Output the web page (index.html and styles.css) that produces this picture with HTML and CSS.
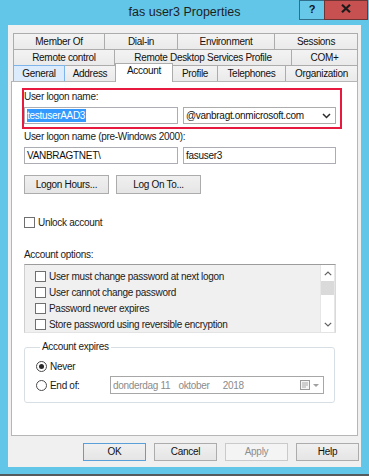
FILE: index.html
```html
<!DOCTYPE html>
<html lang="en">
<head>
<meta charset="utf-8">
<title>fas user3 Properties</title>
<link rel="stylesheet" href="styles.css">
</head>
<body>
<div class="window">
  <div class="titlebar">
    <div class="title">fas user3 Properties</div>
    <div class="caption-btns">
      <div class="cap-btn help">?</div>
      <div class="cap-btn close">
        <svg width="10" height="9" viewBox="0 0 10 9"><path d="M1 0.8 L9 8.2 M9 0.8 L1 8.2" stroke="#1b1b1b" stroke-width="2.2" fill="none"/></svg>
      </div>
    </div>
  </div>

  <div class="client">
    <div class="tabs">
      <div class="tab-row">
        <div class="tab t-member">Member Of</div>
        <div class="tab t-dialin">Dial-in</div>
        <div class="tab t-env">Environment</div>
        <div class="tab t-sessions">Sessions</div>
      </div>
      <div class="tab-row">
        <div class="tab t-remote">Remote control</div>
        <div class="tab t-rds">Remote Desktop Services Profile</div>
        <div class="tab t-com">COM+</div>
      </div>
      <div class="tab-row front-row">
        <div class="tab t-general hot">General</div>
        <div class="tab t-address">Address</div>
        <div class="tab t-account selected">Account</div>
        <div class="tab t-profile">Profile</div>
        <div class="tab t-phones">Telephones</div>
        <div class="tab t-org">Organization</div>
      </div>
    </div>

    <div class="panel">
      <div class="highlight-box">
        <div class="field-label">User logon name:</div>
        <div class="field-row">
          <div class="textbox"><span class="selection">testuserAAD3</span></div>
          <div class="textbox combo">
            <span>@vanbragt.onmicrosoft.com</span>
            <svg class="chev" width="9" height="6" viewBox="0 0 9 6"><path d="M1 1 L4.5 4.5 L8 1" stroke="#2b2b2b" stroke-width="1.5" fill="none"/></svg>
          </div>
        </div>
      </div>

      <div class="field-label second">User logon name (pre-Windows 2000):</div>
      <div class="field-row">
        <div class="textbox">VANBRAGTNET\</div>
        <div class="textbox">fasuser3</div>
      </div>

      <div class="button-row">
        <div class="btn wide">Logon Hours...</div>
        <div class="btn wide">Log On To...</div>
      </div>

      <div class="check-row unlock">
        <span class="check"></span>
        <span>Unlock account</span>
      </div>

      <div class="field-label options-label">Account options:</div>
      <div class="listbox">
        <div class="list-items">
          <div class="check-row item"><span class="check"></span><span>User must change password at next logon</span></div>
          <div class="check-row item"><span class="check"></span><span>User cannot change password</span></div>
          <div class="check-row item"><span class="check"></span><span>Password never expires</span></div>
          <div class="check-row item"><span class="check"></span><span>Store password using reversible encryption</span></div>
        </div>
        <div class="scrollbar">
          <div class="sb-arrow">
            <svg width="8" height="5" viewBox="0 0 8 5"><path d="M0.8 4.2 L4 1 L7.2 4.2" stroke="#606060" stroke-width="1.2" fill="none"/></svg>
          </div>
          <div class="sb-thumb"></div>
          <div class="sb-track"></div>
          <div class="sb-arrow">
            <svg width="8" height="5" viewBox="0 0 8 5"><path d="M0.8 0.8 L4 4 L7.2 0.8" stroke="#606060" stroke-width="1.2" fill="none"/></svg>
          </div>
        </div>
      </div>

      <fieldset class="group">
        <legend>Account expires</legend>
        <div class="radio-row never">
          <span class="radio checked"></span>
          <span>Never</span>
        </div>
        <div class="radio-row endof">
          <div class="radio-label">
            <span class="radio"></span>
            <span>End of:</span>
          </div>
          <div class="datepicker">
            <span class="date-text"><span class="d-day">donderdag 11</span><span class="d-month">oktober</span><span>2018</span></span>
            <svg class="cal" width="20" height="11" viewBox="0 0 20 11">
              <rect x="0.5" y="0.5" width="9" height="9" fill="#f4f4f4" stroke="#9a9a9a"/>
              <path d="M2 3 H8 M2 5 H8 M2 7 H6" stroke="#a8a8a8" stroke-width="1"/>
              <path d="M13 4 H19 L16 7 Z" fill="#a0a0a0"/>
            </svg>
          </div>
        </div>
      </fieldset>
    </div>

    <div class="dialog-buttons">
      <div class="btn default">OK</div>
      <div class="btn">Cancel</div>
      <div class="btn disabled">Apply</div>
      <div class="btn">Help</div>
    </div>
  </div>
</div>
<div class="bottom-edge"></div>
</body>
</html>
```

FILE: styles.css
```css
* {
  box-sizing: border-box;
}

html,
body {
  margin: 0;
  padding: 0;
}

body {
  width: 369px;
  height: 476px;
  overflow: hidden;
  background: #62c6e9;
  font-family: "Liberation Sans", Arial, sans-serif;
  font-size: 10px;
  letter-spacing: -0.3px;
  color: #000;
  display: flex;
  flex-direction: column;
}

.window {
  height: 474px;
  display: flex;
  flex-direction: column;
}

.bottom-edge {
  height: 2px;
  background: #555a5c;
}

/* title bar */
.titlebar {
  height: 25px;
  display: grid;
  grid-template-columns: 1fr auto 1fr;
  align-items: start;
}

.title {
  grid-column: 2;
  font-size: 12.5px;
  letter-spacing: 0;
  line-height: 24px;
  color: #1e1e1e;
}

.caption-btns {
  grid-column: 3;
  justify-self: end;
  display: flex;
  margin-right: 1px;
}

.cap-btn {
  height: 20px;
  display: flex;
  align-items: center;
  justify-content: center;
  padding-bottom: 3px;
}

.help {
  width: 25px;
  background: #67c8ea;
  border: 1px solid #2f6f8c;
  border-right: none;
  font-weight: bold;
  font-size: 11px;
  letter-spacing: 0;
  color: #111;
}

.close {
  width: 44px;
  background: #c75050;
  border: 1px solid #6e3434;
}

/* client area */
.client {
  margin: 0 8px;
  height: 442px;
  background: #f0f0f0;
  padding: 8px 3px 6px 3px;
  display: flex;
  flex-direction: column;
}

/* tabs */
.tabs {
  margin-left: 2px;
  width: 345px;
}

.tab-row {
  display: flex;
  height: 16px;
}

.tab {
  height: 16px;
  border: 1px solid #acacac;
  border-bottom: none;
  margin-right: -1px;
  background: linear-gradient(#f3f3f3, #eaeaea);
  text-align: center;
  line-height: 15px;
  white-space: nowrap;
  color: #111;
}

.t-member { width: 92px; }
.t-dialin { width: 74px; }
.t-env { width: 98px; }
.t-sessions { width: 84px; }
.t-remote { width: 102px; }
.t-rds { width: 178px; }
.t-com { width: 67px; }
.t-general { width: 52px; }
.t-address { width: 52px; }
.t-account { width: 58px; }
.t-profile { width: 46px; }
.t-phones { width: 69px; }
.t-org { width: 73px; }

.front-row {
  align-items: flex-end;
}

.tab.hot {
  background: #dcecfc;
  border-color: #7eb4ea;
  position: relative;
  z-index: 1;
}

.tab.selected {
  height: 19px;
  margin-top: -2px;
  margin-bottom: -1px;
  align-self: flex-start;
  background: #fff;
  position: relative;
  z-index: 2;
  line-height: 14px;
}

/* panel */
.panel {
  flex: 1;
  background: #fff;
  border: 1px solid #b6b6b6;
  padding: 6px 0 0 12px;
}

.highlight-box {
  margin-left: -2px;
  width: 320px;
  border: 2px solid #e8193f;
  padding: 0 4px 3px 0;
}

.field-label {
  line-height: 14px;
  height: 14px;
  color: #1a1a1a;
  white-space: nowrap;
}

.field-label.second {
  margin-top: 1px;
}

.field-row {
  display: grid;
  grid-template-columns: 154px 153px;
  column-gap: 5px;
  margin-top: 3px;
}

.textbox {
  height: 17px;
  border: 1px solid #abadb3;
  background: #fff;
  padding: 0 2px;
  line-height: 15px;
  white-space: nowrap;
  overflow: hidden;
  color: #111;
}

.selection {
  background: #3399ff;
  color: #fff;
  display: inline-block;
  line-height: 13px;
  padding-right: 1px;
}

.combo {
  display: flex;
  align-items: center;
  justify-content: space-between;
  border-color: #acacac;
  padding-right: 4px;
}

.chev {
  flex: none;
}

/* buttons */
.button-row {
  display: flex;
  gap: 7px;
  margin-top: 11px;
}

.btn {
  width: 63px;
  height: 18px;
  border: 1px solid #acacac;
  background: linear-gradient(#f0f0f0, #e5e5e5);
  text-align: center;
  line-height: 16px;
  color: #111;
  white-space: nowrap;
}

.btn.wide {
  width: 85px;
  height: 19px;
  line-height: 17px;
}

.btn.default {
  border-color: #5b9fd8;
}

.btn.disabled {
  background: #f4f4f4;
  border-color: #c8cacc;
  color: #8d8d8d;
}

/* checkboxes */
.check-row {
  display: flex;
  align-items: center;
  gap: 3px;
  white-space: nowrap;
  color: #1a1a1a;
}

.check {
  width: 11px;
  height: 11px;
  border: 1px solid #6f6f6f;
  background: #fff;
  flex: none;
}

.unlock {
  height: 14px;
  margin-top: 21px;
}

.options-label {
  margin-top: 19px;
}

/* listbox */
.listbox {
  margin-top: 2px;
  width: 312px;
  height: 69px;
  display: flex;
  background: #f0f0f0;
  border: 1px solid;
  border-color: #9c9c9c #d9d9d9 #e3e3e3 #cfcfcf;
}

.list-items {
  flex: 1;
  padding: 3px 0 0 10px;
}

.check-row.item {
  height: 16px;
}

.scrollbar {
  width: 15px;
  background: #fff;
  border: 1px solid #e6e6e6;
  border-top: none;
  border-bottom: none;
  display: flex;
  flex-direction: column;
}

.sb-arrow {
  height: 16px;
  display: flex;
  align-items: center;
  justify-content: center;
  flex: none;
}

.sb-thumb {
  height: 14px;
  background: #dadada;
  flex: none;
}

.sb-track {
  flex: 1;
}

/* account expires group */
.group {
  margin: 7px 0 0 0;
  width: 311px;
  border: 1px solid #d8dfe4;
  border-radius: 3px;
  padding: 0 0 8px 11px;
  min-width: 0;
}

.group legend {
  line-height: 14px;
  padding: 0 2px;
  margin-left: 4px;
  color: #1a1a1a;
}

.radio-row {
  display: flex;
  align-items: center;
  gap: 3px;
  color: #1a1a1a;
}

.never {
  height: 14px;
  margin-top: 5px;
}

.endof {
  height: 18px;
  margin-top: 3px;
  gap: 0;
}

.radio-label {
  width: 74px;
  display: flex;
  align-items: center;
  gap: 3px;
}

.radio {
  width: 11px;
  height: 11px;
  border: 1px solid #4a4a4a;
  border-radius: 50%;
  background: #fff;
  flex: none;
  display: flex;
  align-items: center;
  justify-content: center;
}

.radio.checked::after {
  content: "";
  width: 5px;
  height: 5px;
  border-radius: 50%;
  background: #2a2a2a;
}

.datepicker {
  width: 214px;
  height: 18px;
  border: 1px solid #a7a7a7;
  background: #fff;
  display: flex;
  align-items: center;
  justify-content: space-between;
  padding: 0 3px 0 2px;
  color: #8b8b8b;
  white-space: nowrap;
}

.d-day {
  margin-right: 8px;
}

.d-month {
  margin-right: 13px;
}

/* dialog buttons */
.dialog-buttons {
  display: flex;
  justify-content: flex-end;
  gap: 8px;
  margin-top: 7px;
  margin-right: -1px;
}
```
